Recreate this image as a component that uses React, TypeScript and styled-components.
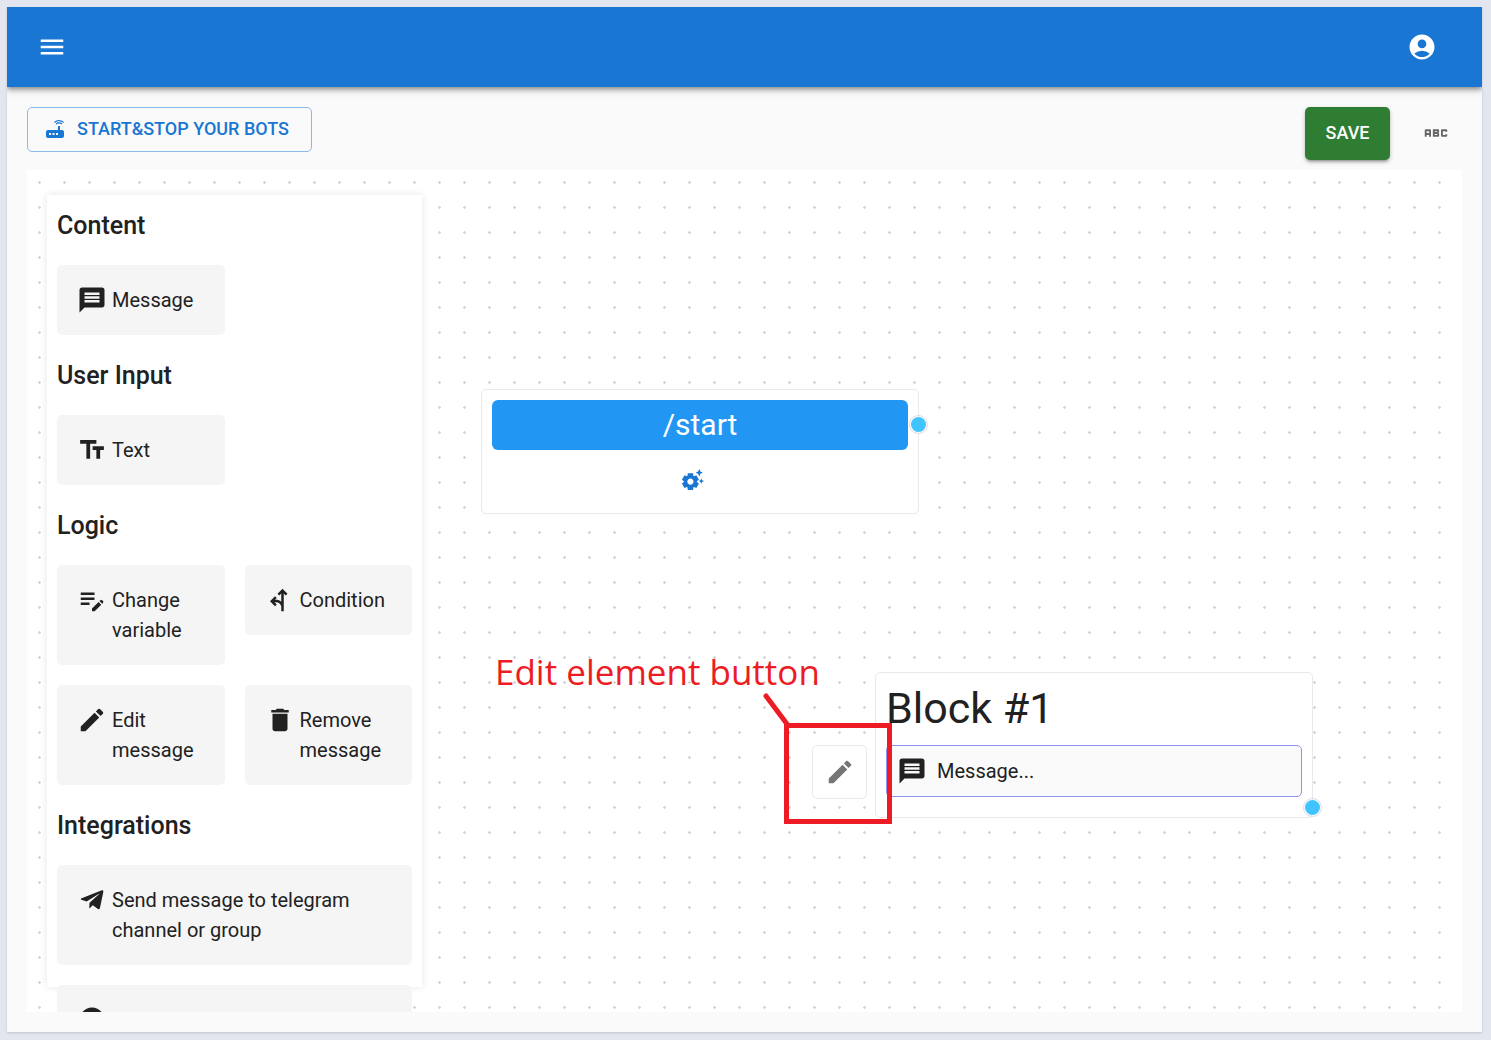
import React from "react";
import styled, { createGlobalStyle } from "styled-components";
import {
  MdAbc,
  MdAccountCircle,
  MdCircle,
  MdDelete,
  MdEdit,
  MdEditNote,
  MdForkLeft,
  MdMenu,
  MdMessage,
  MdRouter,
  MdSettingsSuggest,
  MdTextFields,
} from "react-icons/md";
import { FaTelegramPlane } from "react-icons/fa";

const GlobalStyle = createGlobalStyle`
  *, *::before, *::after { box-sizing: border-box; }
  body {
    margin: 0;
    background: #e3e5ef;
    color: #212121;
    font-family: Roboto, "Liberation Sans", sans-serif;
    font-size: 20px;
    line-height: 30px;
  }
  button { font-family: inherit; cursor: pointer; }
`;

const Page = styled.div`
  height: 100vh;
  padding: 7px 9px 8px 7px;
`;

const Shell = styled.div`
  display: flex;
  flex-direction: column;
  height: 100%;
  background: #fafafa;
  box-shadow: 0 1px 2px rgba(60, 60, 90, 0.2);
`;

const AppBar = styled.header`
  display: flex;
  align-items: center;
  justify-content: space-between;
  flex: none;
  height: 80px;
  padding: 0 30px;
  background: #1976d2;
  box-shadow: 0 2px 5px rgba(0, 0, 0, 0.4), 0 4px 8px rgba(0, 0, 0, 0.12);
  clip-path: inset(0 0 -16px 0);
`;

const BarButton = styled.button<{ $size: number }>`
  display: grid;
  place-items: center;
  width: ${(p) => p.$size}px;
  height: ${(p) => p.$size}px;
  padding: 0;
  border: 0;
  background: none;
  color: #fff;
  font-size: 30px;
`;

const Main = styled.main`
  display: flex;
  flex-direction: column;
  flex: 1;
  gap: 10px;
  min-height: 0;
  padding: 20px;
`;

const Toolbar = styled.div`
  display: flex;
  align-items: flex-start;
  gap: 20px;
`;

const OutlinedButton = styled.button`
  display: flex;
  align-items: center;
  gap: 10px;
  height: 45px;
  margin-right: auto;
  padding: 0 22px 2px 15px;
  border: 1px solid #8bb9e8;
  border-radius: 5px;
  background: none;
  color: #1976d2;
  font-size: 18px;
  font-weight: 500;

  svg { font-size: 24px; }
`;

const SaveButton = styled.button`
  min-width: 85px;
  height: 53px;
  padding: 0 20px 2px;
  border: 0;
  border-radius: 5px;
  background: #2e7d32;
  color: #fff;
  font-size: 18px;
  font-weight: 500;
  box-shadow: 0 3px 3px -2px rgba(0, 0, 0, 0.3), 0 2px 4px rgba(0, 0, 0, 0.25);
`;

const IconButton = styled.button`
  display: grid;
  place-items: center;
  width: 52px;
  height: 52px;
  padding: 0;
  border: 0;
  background: none;
  color: #666;
  font-size: 30px;
`;

const Canvas = styled.section`
  position: relative;
  flex: 1;
  min-height: 0;
  padding: 25px 20px;
  overflow: hidden;
  background: #fff radial-gradient(circle at 12.5px 12.5px, #d2d2d2 1px, transparent 1.5px) 0 0 / 25px 25px;
`;

const Palette = styled.aside`
  position: relative;
  display: flex;
  flex-direction: column;
  gap: 20px;
  width: 375px;
  height: 100%;
  padding: 10px;
  background: #fff;
  box-shadow: 0 0 8px rgba(0, 0, 0, 0.1);
`;

const GroupTitle = styled.h2`
  flex: none;
  margin: 0;
  padding-top: 2px;
  font-size: 25px;
  font-weight: 500;
  line-height: 38px;
`;

const Group = styled.div`
  display: grid;
  flex: none;
  grid-template-columns: 1fr 1fr;
  align-items: start;
  gap: 20px;
`;

const Card = styled.button<{ $wide?: boolean }>`
  display: flex;
  align-items: flex-start;
  gap: 5px;
  grid-column: ${(p) => (p.$wide ? "1 / -1" : "auto")};
  padding: 20px;
  border: 0;
  border-radius: 5px;
  background: #f5f5f5;
  color: #212121;
  font-size: 20px;
  line-height: 30px;
  text-align: left;
  cursor: grab;

  svg { flex: none; width: 30px; height: 30px; }
`;

const PlaneIcon = styled(FaTelegramPlane)`
  padding: 2px;
`;

const Node = styled.article<{ $x: number; $y: number }>`
  position: absolute;
  left: ${(p) => p.$x}px;
  top: ${(p) => p.$y}px;
  display: flex;
  flex-direction: column;
  width: 438px;
  padding: 10px;
  border: 1px solid #e8e8ee;
  border-radius: 5px;
  background: #fff;
`;

const Command = styled.div`
  border-radius: 6px;
  background: #2196f3;
  color: #fff;
  font-size: 30px;
  line-height: 50px;
  text-align: center;
`;

const SettingsButton = styled.button`
  align-self: center;
  width: 80px;
  height: 43px;
  margin: 10px 0 0;
  padding: 0 20px 4px;
  border: 0;
  background: none;
  color: #1976d2;
  font-size: 25px;
  text-align: left;

  svg { display: block; }
`;

const Handle = styled.span<{ $top: number }>`
  position: absolute;
  top: ${(p) => p.$top}px;
  right: -10px;
  width: 19px;
  height: 19px;
  border: 1px solid #dcdce6;
  border-radius: 50%;
  background: #40c4ff;
  background-clip: content-box;
  padding: 1px;
`;

const BlockTitle = styled.h1`
  margin: 0;
  padding-bottom: 12px;
  font-size: 43px;
  font-weight: 400;
  line-height: 50px;
`;

const BlockItem = styled.div`
  display: flex;
  align-items: center;
  gap: 10px;
  height: 52px;
  margin-bottom: 10px;
  padding: 0 10px;
  border: 1px solid #8f92f0;
  border-radius: 5px;
  background: #fafafa;

  svg { font-size: 30px; }
`;

const EditButton = styled.button`
  position: absolute;
  top: 72px;
  left: -64px;
  display: grid;
  place-items: center;
  width: 55px;
  height: 54px;
  padding: 0;
  border: 1px solid #e8e8ee;
  border-radius: 5px;
  background: #fff;
  color: #757575;
  font-size: 30px;
`;

const Callout = styled.p`
  position: absolute;
  left: 468px;
  top: 478px;
  margin: 0;
  color: #ed1c24;
  font-family: "Open Sans", "Noto Sans", sans-serif;
  font-size: 35px;
  line-height: 48px;
  white-space: nowrap;
`;

const CalloutFrame = styled.div`
  position: absolute;
  left: 757px;
  top: 553px;
  width: 108px;
  height: 101px;
  border: 5px solid #ed1c24;
  pointer-events: none;
`;

const CalloutLine = styled.svg`
  position: absolute;
  left: 735px;
  top: 521px;
  width: 30px;
  height: 36px;
  stroke: #ed1c24;
  stroke-width: 5;
  stroke-linecap: round;
`;

interface Item {
  label: string;
  icon: React.ReactNode;
  wide?: boolean;
}

const groups: { title: string; items: Item[] }[] = [
  { title: "Content", items: [{ label: "Message", icon: <MdMessage /> }] },
  { title: "User Input", items: [{ label: "Text", icon: <MdTextFields /> }] },
  {
    title: "Logic",
    items: [
      { label: "Change variable", icon: <MdEditNote /> },
      { label: "Condition", icon: <MdForkLeft /> },
      { label: "Edit message", icon: <MdEdit /> },
      { label: "Remove message", icon: <MdDelete /> },
    ],
  },
  {
    title: "Integrations",
    items: [
      { label: "Send message to telegram channel or group", icon: <PlaneIcon />, wide: true },
      { label: "", icon: <MdCircle />, wide: true },
    ],
  },
];

export default function App() {
  return (
    <Page>
      <GlobalStyle />
      <Shell>
        <AppBar>
          <BarButton $size={30} aria-label="Menu"><MdMenu /></BarButton>
          <BarButton $size={60} aria-label="Account"><MdAccountCircle /></BarButton>
        </AppBar>
        <Main>
          <Toolbar>
            <OutlinedButton><MdRouter />START&amp;STOP YOUR BOTS</OutlinedButton>
            <SaveButton>SAVE</SaveButton>
            <IconButton aria-label="Rename"><MdAbc /></IconButton>
          </Toolbar>
          <Canvas>
            <Palette>
              {groups.map((group) => (
                <React.Fragment key={group.title}>
                  <GroupTitle>{group.title}</GroupTitle>
                  <Group>
                    {group.items.map((item) => (
                      <Card key={item.label} $wide={item.wide}>
                        {item.icon}
                        <span>{item.label}</span>
                      </Card>
                    ))}
                  </Group>
                </React.Fragment>
              ))}
            </Palette>
            <Node $x={454} $y={219}>
              <Command>/start</Command>
              <SettingsButton aria-label="Settings"><MdSettingsSuggest /></SettingsButton>
              <Handle $top={25} />
            </Node>
            <Node $x={848} $y={502}>
              <BlockTitle>Block #1</BlockTitle>
              <BlockItem><MdMessage />Message...</BlockItem>
              <EditButton aria-label="Edit element"><MdEdit /></EditButton>
              <Handle $top={125} />
            </Node>
            <Callout>Edit element button</Callout>
            <CalloutLine viewBox="0 0 30 36"><path d="M4 5 25 33" /></CalloutLine>
            <CalloutFrame />
          </Canvas>
        </Main>
      </Shell>
    </Page>
  );
}
